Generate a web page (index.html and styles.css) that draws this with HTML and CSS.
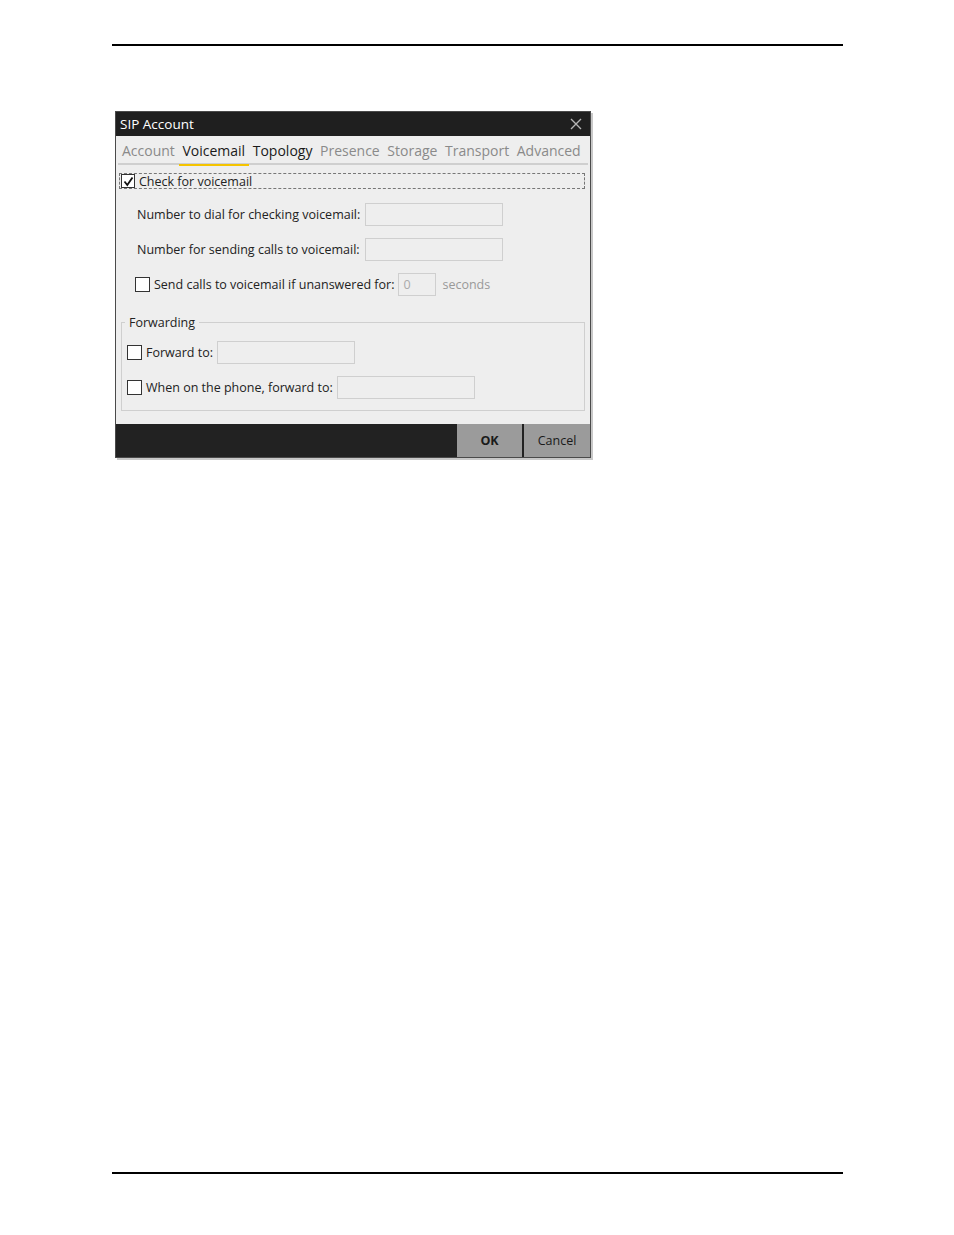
FILE: index.html
```html
<!DOCTYPE html>
<html lang="en">
<head>
    <meta charset="UTF-8">
    <title>SIP Account</title>
    <link rel="stylesheet" href="styles.css">
</head>
<body>
    <div class="page">
        <div class="rule rule-top"></div>

        <div class="dialog">
            <div class="titlebar">
                <span class="title">SIP Account</span>
                <svg class="close" width="12" height="12" viewBox="0 0 12 12">
                    <path d="M1 1L11 11M11 1L1 11" stroke="#b5b5b5" stroke-width="1.4" fill="none"/>
                </svg>
            </div>

            <div class="tabs">
                <span class="tab">Account</span>
                <span class="tab active">Voicemail</span>
                <span class="tab current">Topology</span>
                <span class="tab">Presence</span>
                <span class="tab">Storage</span>
                <span class="tab">Transport</span>
                <span class="tab">Advanced</span>
            </div>

            <div class="content">
                <div class="check-row focused">
                    <span class="box checked">
                        <svg width="11" height="11" viewBox="0 0 11 11">
                            <path d="M1.5 5.5L4.3 9L9.5 1.5" stroke="#111" stroke-width="1.8" fill="none"/>
                        </svg>
                    </span>
                    <span>Check for voicemail</span>
                </div>

                <div class="field-row">
                    <span class="field-label">Number to dial for checking voicemail:</span>
                    <span class="input wide"></span>
                </div>
                <div class="field-row">
                    <span class="field-label">Number for sending calls to voicemail:</span>
                    <span class="input wide"></span>
                </div>
                <div class="field-row unanswered">
                    <span class="box"></span>
                    <span class="inline-label">Send calls to voicemail if unanswered for:</span>
                    <span class="input small">0</span>
                    <span class="muted">seconds</span>
                </div>

                <fieldset class="group">
                    <legend>Forwarding</legend>
                    <div class="group-row">
                        <span class="box"></span>
                        <span class="inline-label">Forward to:</span>
                        <span class="input wide"></span>
                    </div>
                    <div class="group-row">
                        <span class="box"></span>
                        <span class="inline-label">When on the phone, forward to:</span>
                        <span class="input wide"></span>
                    </div>
                </fieldset>
            </div>

            <div class="footer">
                <button class="btn btn-ok">OK</button>
                <button class="btn">Cancel</button>
            </div>
        </div>

        <div class="rule rule-bottom"></div>
    </div>
</body>
</html>
```

FILE: styles.css
```css
html, body {
    margin: 0;
    padding: 0;
    background-color: #fff;
}
body {
    font-family: 'Open Sans', 'Noto Sans', 'Liberation Sans', sans-serif;
    color: #222;
}
.page {
    height: 1235px;
    display: flex;
    flex-direction: column;
    box-sizing: border-box;
}
.rule {
    height: 2px;
    background-color: #000;
    margin-left: 112px;
    width: 731px;
}
.rule-top {
    margin-top: 44px;
}
.rule-bottom {
    margin-top: auto;
    margin-bottom: 61px;
}
.dialog {
    margin-top: 65px;
    margin-left: 115px;
    width: 476px;
    height: 347px;
    box-sizing: border-box;
    border: 1px solid #4a4a4a;
    background-color: #eeeeee;
    box-shadow: 2px 2px 0 #c8c8c8;
    display: flex;
    flex-direction: column;
}
.titlebar {
    height: 24px;
    background-color: #1f1f1f;
    display: flex;
    align-items: center;
    justify-content: space-between;
    padding: 0 8px 0 4px;
}
.title {
    color: #fff;
    font-size: 13.5px;
}
.tabs {
    height: 26px;
    margin: 0 2px;
    border-bottom: 2px solid #cfcfcf;
    display: flex;
    align-items: center;
    gap: 7.6px;
    padding-left: 4px;
    padding-top: 1px;
}
.tab {
    font-size: 14px;
    color: #8a8a8a;
    position: relative;
}
.tab.active,
.tab.current {
    color: #1a1a1a;
}
.tab.active::after {
    content: '';
    position: absolute;
    left: -3px;
    right: -4px;
    bottom: -6px;
    height: 2px;
    background-color: #f5c400;
}
.content {
    flex-grow: 1;
    padding: 8px 5px 0 3px;
    font-size: 12.5px;
}
.box {
    width: 13px;
    height: 13px;
    border: 1px solid #333;
    background-color: #fff;
    display: inline-flex;
    align-items: center;
    justify-content: center;
    flex-shrink: 0;
}
.check-row {
    display: flex;
    align-items: center;
    gap: 4px;
    height: 14px;
    padding-left: 1px;
    border: 1px dashed #777;
    margin-bottom: 14px;
}
.check-row .box {
    width: 12px;
    height: 12px;
}
.field-row {
    display: flex;
    align-items: center;
    height: 23px;
    margin-bottom: 12px;
    padding-left: 18px;
}
.field-label {
    width: 228px;
}
.input {
    height: 21px;
    border: 1px solid #cfcfcf;
    background-color: #eeeeee;
    box-sizing: content-box;
    display: inline-flex;
    align-items: center;
    color: #aaa;
    padding-left: 4px;
}
.input.wide {
    width: 132px;
}
.input.small {
    width: 32px;
    margin-left: 4px;
}
.unanswered {
    padding-left: 16px;
}
.unanswered .inline-label {
    margin-left: 4px;
}
.muted {
    color: #999;
    margin-left: 6px;
}
.group {
    margin: 18px 0 0 2px;
    padding: 10px 5px 10px 5px;
    border: 1px solid #cfcfcf;
    box-sizing: border-box;
    height: 97px;
}
.group legend {
    padding: 0 4px;
    margin-left: -2px;
    font-size: 12.5px;
}
.group-row {
    display: flex;
    align-items: center;
    height: 23px;
    margin-bottom: 12px;
}
.group-row .inline-label {
    margin: 0 4px 0 4px;
}
.footer {
    height: 33px;
    background-color: #222;
    display: flex;
    justify-content: flex-end;
    gap: 2px;
}
.btn {
    width: 66px;
    height: 33px;
    border: none;
    background-color: #9b9b9b;
    color: #1a1a1a;
    font-family: inherit;
    font-size: 12.5px;
    padding: 0;
}
.btn-ok {
    width: 65px;
    font-weight: 700;
}
```
